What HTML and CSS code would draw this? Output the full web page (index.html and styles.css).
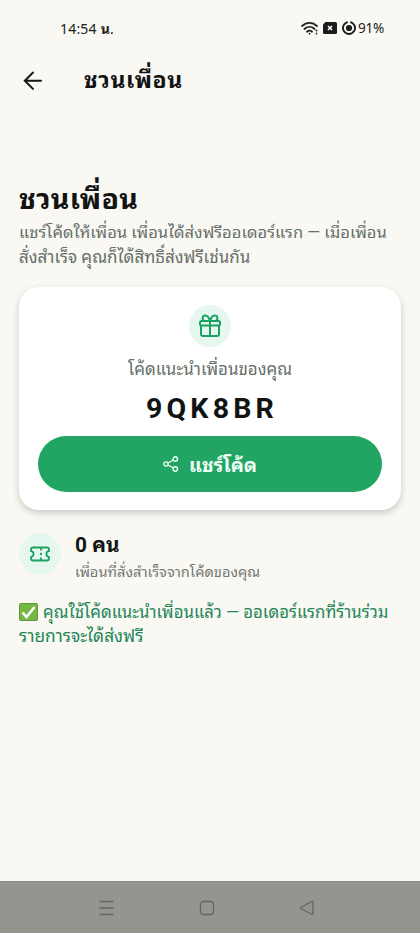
FILE: index.html
```html
<!DOCTYPE html>
<html lang="th">
<head>
<meta charset="utf-8">
<title>ชวนเพื่อน</title>
<link rel="stylesheet" href="styles.css">
</head>
<body>
<div class="screen">
  <header class="status">
    <span class="clock">14:54 <b>น</b>.</span>
    <div class="indicators">
      <svg class="wifi" width="18" height="15" viewBox="0 0 18 15" fill="none" stroke="#222" stroke-width="1.8" stroke-linecap="round"><path d="M1 5C5.500.8 11.500.8 16 5M3.500 8C6.500 5.200 10.500 5.200 13.500 8M6 10.700C7.500 9.400 9.500 9.400 11 10.700"/><path d="M8.500 12.600v.1M15.500 9.500v.1M15.500 12.500v.1"/></svg>
      <svg class="sim" width="14" height="12" viewBox="0 0 14 12"><path d="M2.500 0H12.500Q14 0 14 1.500V10.500Q14 12 12.500 12H1.500Q0 12 0 10.500V2.500Z" fill="#1c1c1c"/><path d="M5 4l4 4M9 4L5 8" stroke="#fff" stroke-width="1.600"/></svg>
      <svg class="ring" width="14" height="14" viewBox="0 0 14 14"><path d="M8.200 1.100A6 6 0 1 1 5.800 1.100" fill="none" stroke="#1c1c1c" stroke-width="1.900"/><circle cx="7" cy="7" r="3.100" fill="#1c1c1c"/></svg>
      <span class="battery">91%</span>
    </div>
  </header>
  <nav class="appbar">
    <svg width="20" height="20" viewBox="0 0 20 20" fill="none" stroke="#151515" stroke-width="2" stroke-linecap="round"><path d="M18 9.700H2M10 1.500L1.800 9.700L10 17.900"/></svg>
    <span class="bar-title">ชวนเพื่อน</span>
  </nav>
  <main class="content">
    <h1 class="title">ชวนเพื่อน</h1>
    <p class="lead"><span class="lead-a">แชร์โค้ดให้เพื่อน เพื่อนได้ส่งฟรีออเดอร์แรก — เมื่อเพื่อน</span><br><span class="lead-b">สั่งสำเร็จ คุณก็ได้สิทธิ์ส่งฟรีเช่นกัน</span></p>
    <section class="card">
      <div class="badge">
        <svg width="24" height="24" viewBox="0 0 24 24" fill="none" stroke="#18a362" stroke-width="2" stroke-linejoin="round"><rect x="2" y="7" width="20" height="4.500" rx="1.500"/><path d="M3 11.500V20Q3 22 5 22H19Q21 22 21 20V11.500M12 7V22M12 7C11 3.500 9.500 1.500 7.300 1.500C4 1.500 3.800 5.500 6 7M12 7C13 3.500 14.500 1.500 16.700 1.500C20 1.500 20.200 5.500 18 7"/></svg>
      </div>
      <div class="label">โค้ดแนะนำเพื่อนของคุณ</div>
      <div class="code">9QK8BR</div>
      <button class="share" type="button">
        <svg width="16" height="16" viewBox="0 0 16 16" fill="none" stroke="#e9fff4" stroke-width="1.400"><circle cx="3" cy="8" r="2.100"/><circle cx="12.300" cy="3" r="2.200"/><circle cx="12.300" cy="13" r="2.200"/><path d="M4.900 7L10.400 4M4.900 9L10.400 12"/></svg>
        <span class="share-text">แชร์โค้ด</span>
      </button>
    </section>
    <section class="stat">
      <div class="badge">
        <svg width="20" height="16" viewBox="0 0 20 16" fill="none" stroke="#18a362" stroke-width="1.800" stroke-linejoin="round"><path d="M3 1.500H17Q19 1.500 19 3.500V5.200C15.600 5.200 15.600 10.800 19 10.800V12.500Q19 14.500 17 14.500H3Q1 14.500 1 12.500V10.800C4.400 10.800 4.400 5.200 1 5.200V3.500Q1 1.500 3 1.500Z"/><path d="M11 2v2.500M11 6.800v2.500M11 11.500V14"/></svg>
      </div>
      <div class="stat-text">
        <div class="count">0 คน</div>
        <div class="caption">เพื่อนที่สั่งสำเร็จจากโค้ดของคุณ</div>
      </div>
    </section>
    <p class="note"><svg class="check" width="19" height="18" viewBox="0 0 19 18"><rect x=".5" y=".5" width="18" height="17" rx="1.500" fill="#75b843" stroke="#5d963b"/><path d="M3.500 9.500L7.500 14L15.500 4" fill="none" stroke="#fff" stroke-width="2.600"/></svg><span class="note-a">คุณใช้โค้ดแนะนำเพื่อนแล้ว — ออเดอร์แรกที่ร้านร่วม</span><br><span class="note-b">รายการจะได้ส่งฟรี</span></p>
  </main>
  <footer class="navbar">
    <svg width="16" height="16" viewBox="0 0 16 16"><path d="M.5 1.500h14M.5 8h14M.5 14.500h14"/></svg>
    <svg width="16" height="16" viewBox="0 0 16 16"><rect x="1.500" y="1.500" width="13" height="13" rx="3"/></svg>
    <svg width="16" height="16" viewBox="0 0 16 16"><path d="M2 7.300L12.800 1.500Q14 1 14 2.200V13.500Q14 14.700 12.800 14.200L2 8.500Q1 7.900 2 7.300Z"/></svg>
  </footer>
</div>
</body>
</html>
```
FILE: styles.css
```css
* { box-sizing: border-box; }
body { margin: 0; background: #f9f8f3; font-family: Roboto, "Noto Sans Thai Looped", "Noto Sans Thai", "Noto Sans", sans-serif; color: #111412; }
.screen { height: 933px; display: flex; flex-direction: column; overflow: hidden; white-space: nowrap; }
svg { display: block; flex: none; }
.status { height: 56px; padding: 0 36px 0 60px; display: flex; align-items: center; justify-content: space-between; font-size: 14px; color: #222; }
.clock { font-family: "Noto Sans", "Noto Sans Thai Looped", sans-serif; line-height: 18px; letter-spacing: .2px; margin-top: 2px; }
.indicators { display: flex; align-items: center; }
.battery { font-family: "Noto Sans", sans-serif; font-size: 13.5px; letter-spacing: -.2px; }
.sim { margin: 0 5px 0 4px; }
.ring { margin-right: 2px; }
.appbar { height: 50px; padding-left: 23px; display: flex; align-items: center; gap: 41px; }
.bar-title { font-size: 23px; line-height: 26px; font-weight: 700; letter-spacing: .65px; }
.content { flex: 1; padding: 77px 19px 0; }
.title { margin: 0; height: 38px; line-height: 34px; font-size: 28.500px; font-weight: 700; letter-spacing: .3px; }
.lead { margin: 0; font-size: 16.550px; line-height: 24px; height: 66px; color: #666f69; }
.lead-a { letter-spacing: .01px; }
.lead-b { font-size: 17px; }
.card { height: 223px; padding: 18px 19px 18.500px; border-radius: 20px; background: #fff; box-shadow: 0 3px 7px rgba(60, 58, 45, .24); display: flex; flex-direction: column; align-items: center; }
.badge { width: 42px; height: 42px; flex: none; border-radius: 50%; background: #e6f7ef; display: flex; align-items: center; justify-content: center; }
.label { height: 44px; line-height: 44px; font-size: 16.900px; color: #666f69; }
.code { height: 45.500px; line-height: 35px; font-size: 28.500px; font-weight: 700; letter-spacing: 4.200px; margin-right: -4px; }
.share { width: 100%; height: 56px; flex: none; border: 0; border-radius: 28px; background: #22a463; color: #f0fff7; font-family: inherit; font-size: 19.500px; font-weight: 700; display: flex; align-items: center; justify-content: center; gap: 10px; }
.stat { margin-top: 23px; height: 67px; display: flex; gap: 14px; }
.count { height: 25px; line-height: 25px; font-size: 20.800px; font-weight: 700; }
.caption { height: 28px; line-height: 28px; font-size: 14.600px; color: #737873; }
.note { margin: 0; font-size: 16.800px; line-height: 24px; color: #238657; }
.note-b { font-size: 17.300px; }
.check { display: inline-block; vertical-align: -3px; margin-right: 5px; }
.navbar { height: 52px; padding-right: 6px; border-top: 1px solid #898883; background: #96948f; display: flex; align-items: center; justify-content: center; gap: 84px; }
.navbar svg { fill: none; stroke: #66645f; stroke-width: 1.300; }
```
